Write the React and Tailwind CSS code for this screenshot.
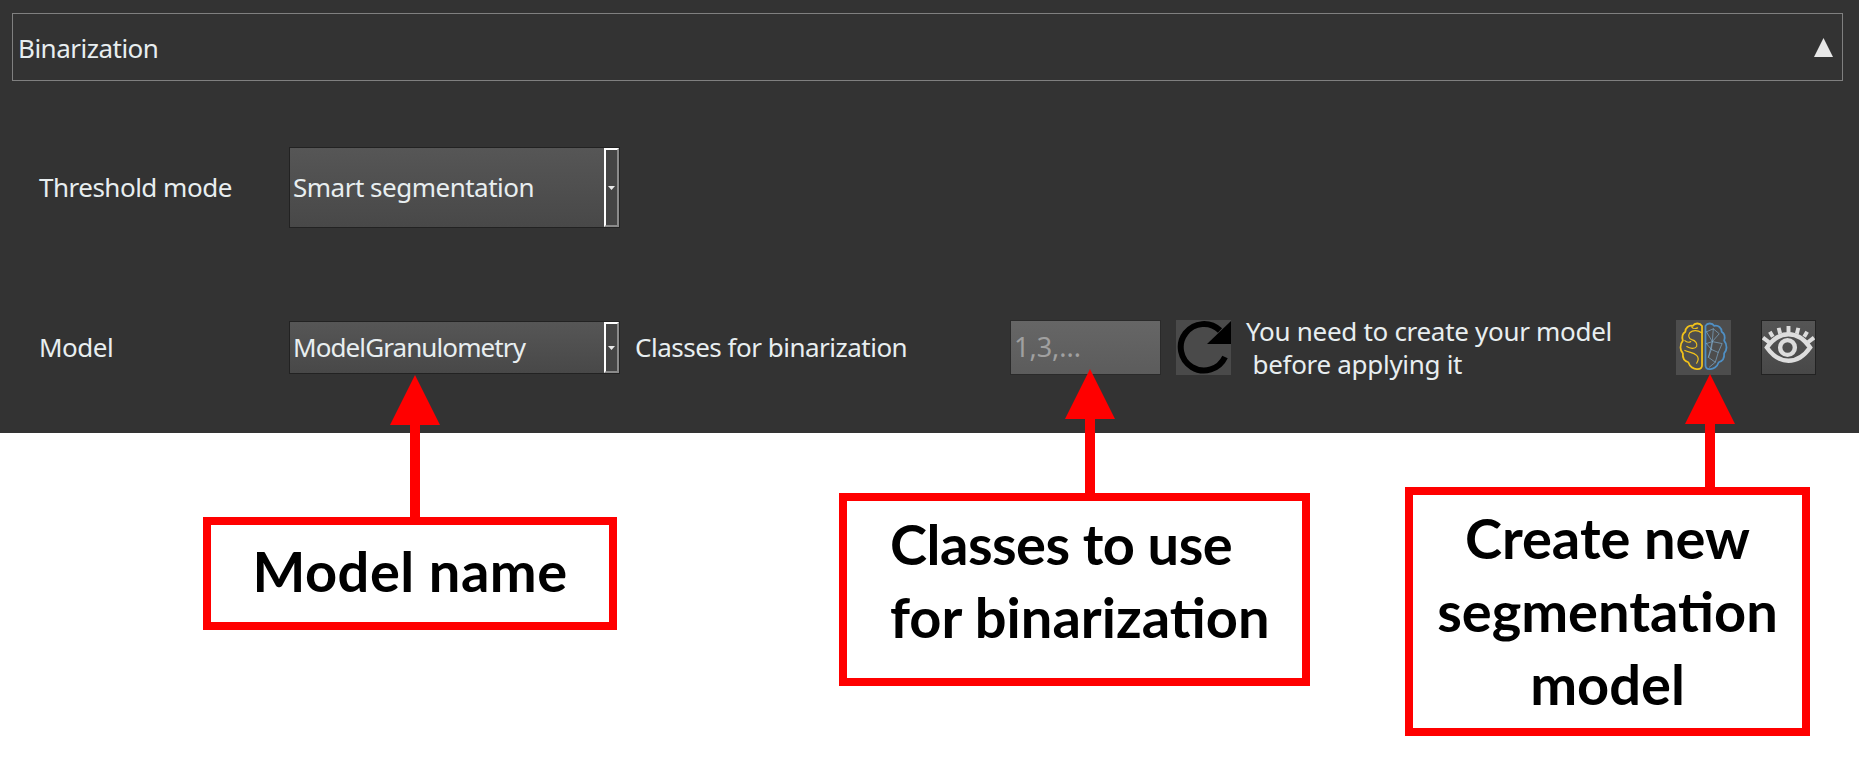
function Combo({ text, className, textClassName }) {
  return (
    <div className={`relative flex items-center w-[331px] border border-[#222222] bg-gradient-to-b from-[#565656] to-[#484848] pl-[3px] text-[26px] text-[#e8eef0] ${className}`}>
      <span className={textClassName}>{text}</span>
      <div className="absolute right-0 top-0 bottom-0 w-[15px] flex items-center justify-center border-2 border-white border-r-[#8a8a8a] border-b-[#8a8a8a] bg-[#444444]">
        <svg width="7" height="4" viewBox="0 0 7 4">
          <polygon points="0,0 7,0 3.5,4" fill="#e8e8e8" />
        </svg>
      </div>
    </div>
  );
}

function RefreshIcon() {
  return (
    <svg width="55" height="55" viewBox="0 0 55 55">
      <path d="M44 10.500A23.200 23.200 0 1 0 49 37" fill="none" stroke="#000000" strokeWidth="6" />
      <polygon points="55,1 55,24 31,24" fill="#000000" />
    </svg>
  );
}

function BrainIcon() {
  return (
    <svg width="55" height="55" viewBox="0 0 56 56" fill="none" strokeLinecap="round" strokeLinejoin="round">
      <g stroke="#f2c21a" strokeWidth="1.8">
        <path d="M26.500 6C24 2.500 19 3 17 6C13 5 9.500 8 9.500 12C6.500 14 6 18 7 21C3.500 25 4 31 7 34C6.500 39 9 42 12.500 43C14 47.500 18 50.500 22 50C25 50 26.500 48.500 26.500 46Z" />
        <path d="M26 13C22 10 17 10 14 13M14 13C12 16 13 19 16 20C20 21 22 24 21 27C19 30 14 29 11 27M9 31C13 33 18 33 21 36C23 38 23 41 21 44M16 7C17 9 20 9 22 8M9 21C11 23 13 23 15 22" strokeWidth="1.200" />
      </g>
      <g stroke="#4f8fc4" strokeWidth="1.8">
        <path d="M30 6C32 2.500 37 3 39 6C43 5 46.500 8 46.500 12C49.500 14 50 18 49 21C52.500 25 52 31 49 34C49.500 39 47 42 43.500 43C42 47.500 38 50.500 34 50C31 50 30 48.500 30 46Z" />
        <path d="M31 12L38 9L44 14L37 22L47 24L43 33L36 30L33 38L40 43L34 48M31 12L37 22L33 38M38 9L37 22M36 30L37 22M43 33L40 43M31 24L37 22M31 24L36 30" strokeWidth="0.7" stroke="#7fa9c9" />
      </g>
    </svg>
  );
}

function EyeIcon() {
  return (
    <svg width="53" height="53" viewBox="2 2 54 54" fill="none" stroke="#dddddd">
      <path d="M7 29C14 19 21 15.500 29 15.500C37 15.500 44 19 51 29C44 39 37 42.500 29 42.500C21 42.500 14 39 7 29Z" strokeWidth="4.500" />
      <circle cx="28" cy="29" r="7.500" strokeWidth="4.500" />
      <path d="M29 7V14M19 9L20.500 15M39 9L37.500 15M10 13L13 18M48 13L45 18M3 19L9 23.500M55 19L49 23.500" strokeWidth="4" />
    </svg>
  );
}

function Arrow({ className, width, height }) {
  return (
    <svg className={`absolute ${className}`} width={width} height={height} viewBox={`0 0 ${width} ${height}`}>
      <polygon points={`${width / 2},0 0,50 ${width},50`} fill="#ff0000" />
      <rect x={width / 2 - 5} y="49" width="10" height={height - 49} fill="#ff0000" />
    </svg>
  );
}

export default function App() {
  return (
    <div className="relative w-[1859px] h-[762px] overflow-hidden bg-white font-['Noto_Sans',sans-serif]">
      <div className="h-[433px] bg-[#333333] pt-[13px] text-[#e8eef0] tracking-[-0.5px]">
        <div className="mx-[12px] mr-[16px] h-[68px] flex items-center justify-between border border-[#808080] pl-[5px] pr-[9px] text-[26px]">
          <span className="pt-[2px]">Binarization</span>
          <svg width="19" height="19" viewBox="0 0 19 19">
            <polygon points="9.500,0 19,19 0,19" fill="#e8e8e8" />
          </svg>
        </div>

        <div className="mt-[66px] flex items-center pl-[39px] text-[26px]">
          <div className="w-[250px]">Threshold mode</div>
          <Combo text="Smart segmentation" className="h-[81px]" />
        </div>

        <div className="mt-[92px] flex items-center h-[55px] pl-[39px] text-[26px]">
          <div className="w-[250px]">Model</div>
          <Combo text="ModelGranulometry" className="h-[53px]" textClassName="tracking-[-0.9px]" />
          <div className="w-[375px] ml-[15px]">Classes for binarization</div>
          <div className="w-[151px] h-[55px] flex items-center border border-[#2a2a2a] bg-gradient-to-b from-[#666666] to-[#5c5c5c] pl-[3px] text-[27px] tracking-normal text-[#a0a0a0]">1,3,...</div>
          <button className="w-[55px] h-[55px] ml-[15px] bg-[#4a4a4a]"><RefreshIcon /></button>
          <div className="w-[430px] ml-[15px] leading-[33px] whitespace-pre tracking-[-0.3px]">{"You need to create your model\n before applying it"}</div>
          <button className="w-[55px] h-[55px] bg-[#4d4d4d]"><BrainIcon /></button>
          <button className="w-[55px] h-[55px] ml-[30px] flex items-center justify-center border border-[#222222] bg-gradient-to-b from-[#555555] to-[#484848]"><EyeIcon /></button>
        </div>
      </div>

      <div className="flex items-start pl-[203px] font-['Lato',sans-serif] font-bold text-black text-[56px] leading-[73px]">
        <div className="mt-[84px] w-[414px] h-[113px] flex items-center justify-center border-[8px] border-[#ff0000] pb-[6px] tracking-[0.5px]">Model name</div>
        <div className="mt-[60px] ml-[222px] w-[471px] h-[193px] border-[8px] border-[#ff0000] pl-[43px] pt-[6px]">
          <div className="tracking-[-0.5px]">Classes to use</div>
          <div>for binarization</div>
        </div>
        <div className="mt-[54px] ml-[95px] w-[405px] h-[249px] border-[8px] border-[#ff0000] pt-[6px] text-center">
          <div>Create new</div>
          <div>segmentation</div>
          <div>model</div>
        </div>
      </div>

      <Arrow className="left-[390px] top-[375px]" width={50} height={142} />
      <Arrow className="left-[1065px] top-[369px]" width={50} height={124} />
      <Arrow className="left-[1685px] top-[374px]" width={50} height={113} />
    </div>
  );
}
